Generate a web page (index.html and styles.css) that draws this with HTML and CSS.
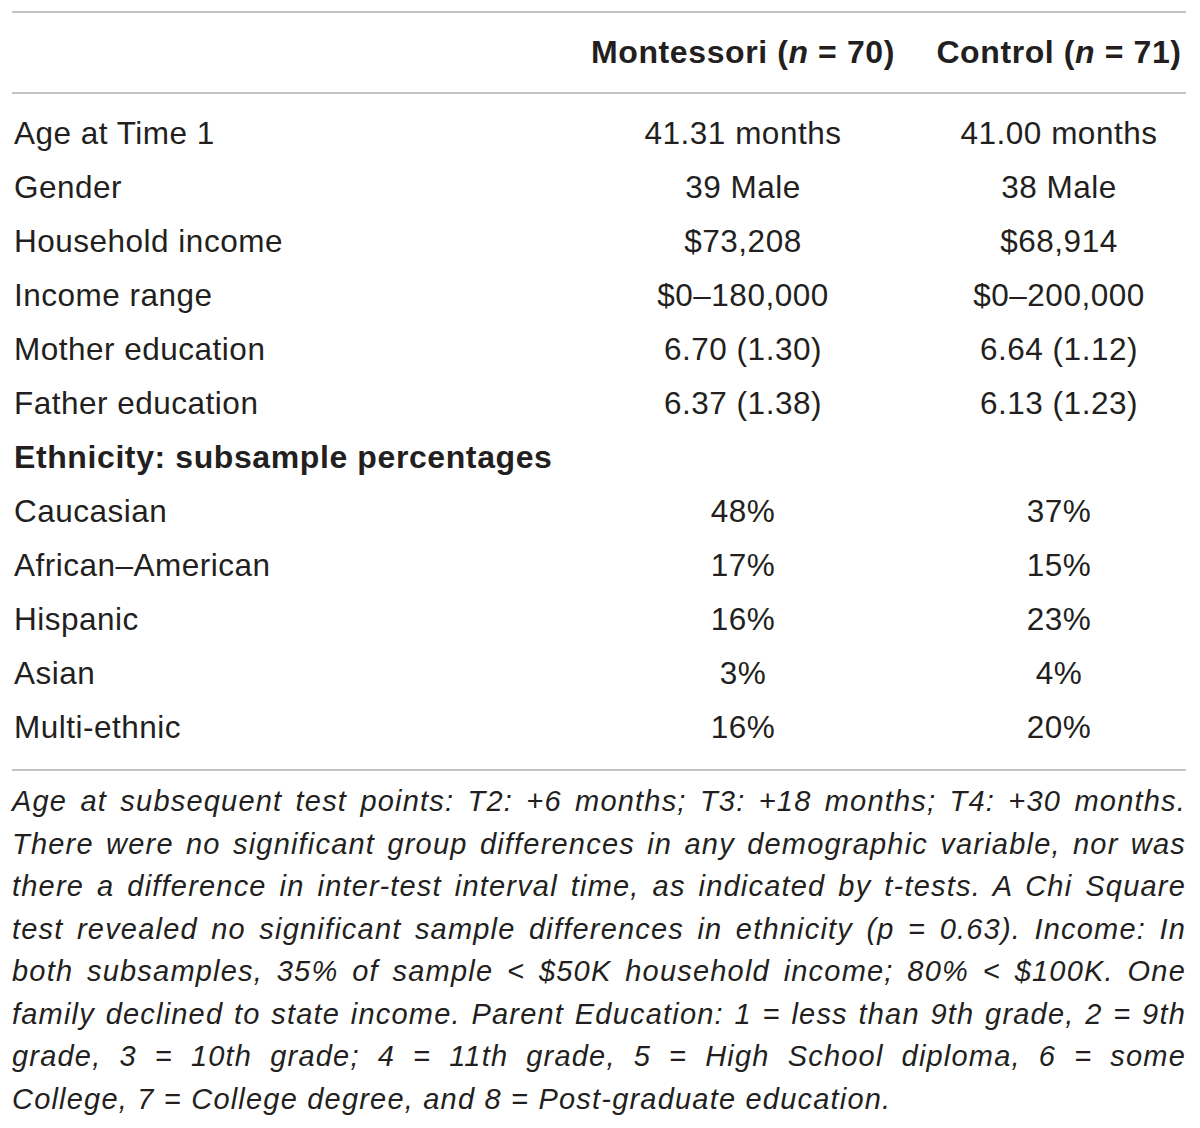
FILE: index.html
```html
<!DOCTYPE html>
<html>
<head>
<meta charset="utf-8">
<link rel="stylesheet" href="styles.css">
</head>
<body>
<div class="page">
  <div class="table">
    <div class="row head">
      <div class="c1"></div>
      <div class="c2">Montessori (<i>n</i> = 70)</div>
      <div class="c3">Control (<i>n</i> = 71)</div>
    </div>
    <div class="body">
      <div class="row"><div class="c1">Age at Time 1</div><div class="c2">41.31 months</div><div class="c3">41.00 months</div></div>
      <div class="row"><div class="c1">Gender</div><div class="c2">39 Male</div><div class="c3">38 Male</div></div>
      <div class="row"><div class="c1">Household income</div><div class="c2">$73,208</div><div class="c3">$68,914</div></div>
      <div class="row"><div class="c1">Income range</div><div class="c2">$0–180,000</div><div class="c3">$0–200,000</div></div>
      <div class="row"><div class="c1">Mother education</div><div class="c2">6.70 (1.30)</div><div class="c3">6.64 (1.12)</div></div>
      <div class="row"><div class="c1">Father education</div><div class="c2">6.37 (1.38)</div><div class="c3">6.13 (1.23)</div></div>
      <div class="row"><div class="c1 bold">Ethnicity: subsample percentages</div><div class="c2"></div><div class="c3"></div></div>
      <div class="row"><div class="c1">Caucasian</div><div class="c2">48%</div><div class="c3">37%</div></div>
      <div class="row"><div class="c1">African–American</div><div class="c2">17%</div><div class="c3">15%</div></div>
      <div class="row"><div class="c1">Hispanic</div><div class="c2">16%</div><div class="c3">23%</div></div>
      <div class="row"><div class="c1">Asian</div><div class="c2">3%</div><div class="c3">4%</div></div>
      <div class="row"><div class="c1">Multi-ethnic</div><div class="c2">16%</div><div class="c3">20%</div></div>
    </div>
  </div>
  <p class="note">
    <span class="ln">Age at subsequent test points: T2: +6 months; T3: +18 months; T4: +30 months.</span>
    <span class="ln">There were no significant group differences in any demographic variable, nor was</span>
    <span class="ln">there a difference in inter-test interval time, as indicated by t-tests. A Chi Square</span>
    <span class="ln">test revealed no significant sample differences in ethnicity (p = 0.63). Income: In</span>
    <span class="ln">both subsamples, 35% of sample &lt; $50K household income; 80% &lt; $100K. One</span>
    <span class="ln">family declined to state income. Parent Education: 1 = less than 9th grade, 2 = 9th</span>
    <span class="ln">grade, 3 = 10th grade; 4 = 11th grade, 5 = High School diploma, 6 = some</span>
    <span class="ln last">College, 7 = College degree, and 8 = Post-graduate education.</span>
  </p>
</div>
</body>
</html>
```

FILE: styles.css
```css
html, body {
  margin: 0;
  padding: 0;
  background: #ffffff;
}

.page {
  padding: 11px 14px 0 12px;
  font-family: "Liberation Sans", Arial, sans-serif;
  color: #231f20;
}

.table {
  border-top: 2px solid #c3c3c3;
  border-bottom: 2px solid #c3c3c3;
}

.row {
  display: grid;
  grid-template-columns: 542px 378px 254px;
  height: 54px;
  align-items: center;
  font-size: 31.5px;
  letter-spacing: 0.5px;
}

.row.head {
  height: 79px;
  border-bottom: 2px solid #c3c3c3;
  font-weight: bold;
  font-size: 32px;
  letter-spacing: 0.6px;
}

.body {
  padding: 12px 0 15px;
}

.c1 {
  padding-left: 2px;
  white-space: nowrap;
}

.c2, .c3 {
  text-align: center;
  white-space: nowrap;
}

.bold {
  font-weight: bold;
  font-size: 32px;
  letter-spacing: 0.6px;
}

.note {
  margin: 0;
  padding-top: 9px;
  font-style: italic;
  font-size: 29px;
  letter-spacing: 1.2px;
  line-height: 42.5px;
}

.ln {
  display: block;
  text-align: justify;
  text-align-last: justify;
  white-space: nowrap;
}

.ln.last {
  text-align-last: left;
}
```
